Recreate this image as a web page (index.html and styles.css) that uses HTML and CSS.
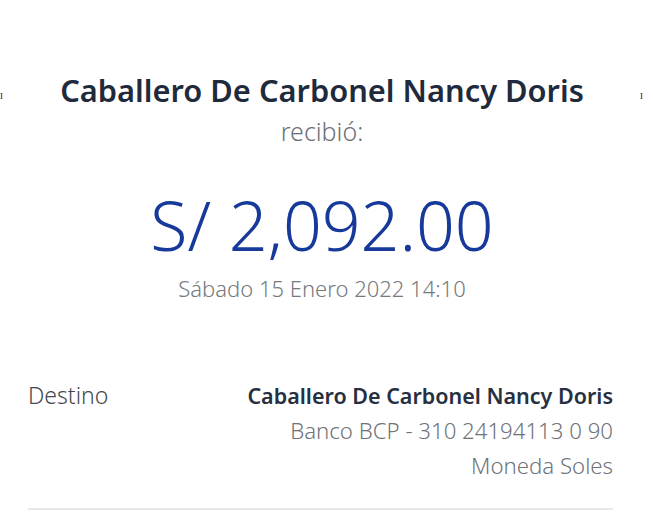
FILE: index.html
```html
<!DOCTYPE html>
<html lang="es">
<head>
    <meta charset="UTF-8">
    <meta name="viewport" content="width=device-width, initial-scale=1.0">
    <title>Constancia de transferencia</title>
    <link rel="stylesheet" href="styles.css">
</head>
<body>

    <!-- Encabezado -->
    <div class="header">
        <span class="mark">I</span>
        <h1 class="receiver">Caballero De Carbonel Nancy Doris</h1>
        <span class="mark">I</span>
    </div>
    <p class="received">recibió:</p>

    <!-- Monto -->
    <div class="amount">S/ 2,092.00</div>
    <div class="date">Sábado 15 Enero 2022 14:10</div>

    <!-- Detalle -->
    <div class="detail">
        <div class="label">Destino</div>
        <div class="values">
            <div class="name">Caballero De Carbonel Nancy Doris</div>
            <div>Banco BCP - 310 24194113 0 90</div>
            <div>Moneda Soles</div>
        </div>
    </div>
    <div class="divider"></div>

</body>
</html>
```

FILE: styles.css
```css
body {
    margin: 0;
    padding: 70px 9px 0 0;
    background: #fff;
    font-family: "Noto Sans", Arial, sans-serif;
}
.header {
    display: flex;
    align-items: center;
    justify-content: space-between;
}
.mark {
    font-family: "Liberation Serif", serif;
    font-size: 9px;
    color: #222;
    width: 4px;
    padding-top: 12px;
}
.receiver {
    margin: 0;
    font-size: 30.8px;
    font-weight: 600;
    color: #1f2a3c;
    line-height: 40px;
}
.received {
    margin: 5px 0 0;
    text-align: center;
    font-size: 25px;
    font-weight: 300;
    color: #6b6f75;
    line-height: 32px;
}
.amount {
    margin-top: 40px;
    text-align: center;
    font-size: 68px;
    font-weight: 300;
    color: #16399a;
    line-height: 76px;
}
.date {
    margin-top: 11px;
    text-align: center;
    font-size: 22px;
    font-weight: 300;
    color: #76797e;
    line-height: 28px;
}
.detail {
    display: flex;
    justify-content: space-between;
    margin: 76px 31px 0 28px;
    font-size: 22.2px;
    line-height: 35px;
}
.label {
    color: #44484e;
    font-weight: 300;
    font-size: 23px;
}
.values {
    text-align: right;
    color: #6f7379;
    font-weight: 300;
}
.name {
    font-size: 21.5px;
    font-weight: 600;
    color: #263041;
}
.divider {
    height: 2px;
    background: #e8e8e8;
    margin: 25px 31px 0 28px;
}
```
